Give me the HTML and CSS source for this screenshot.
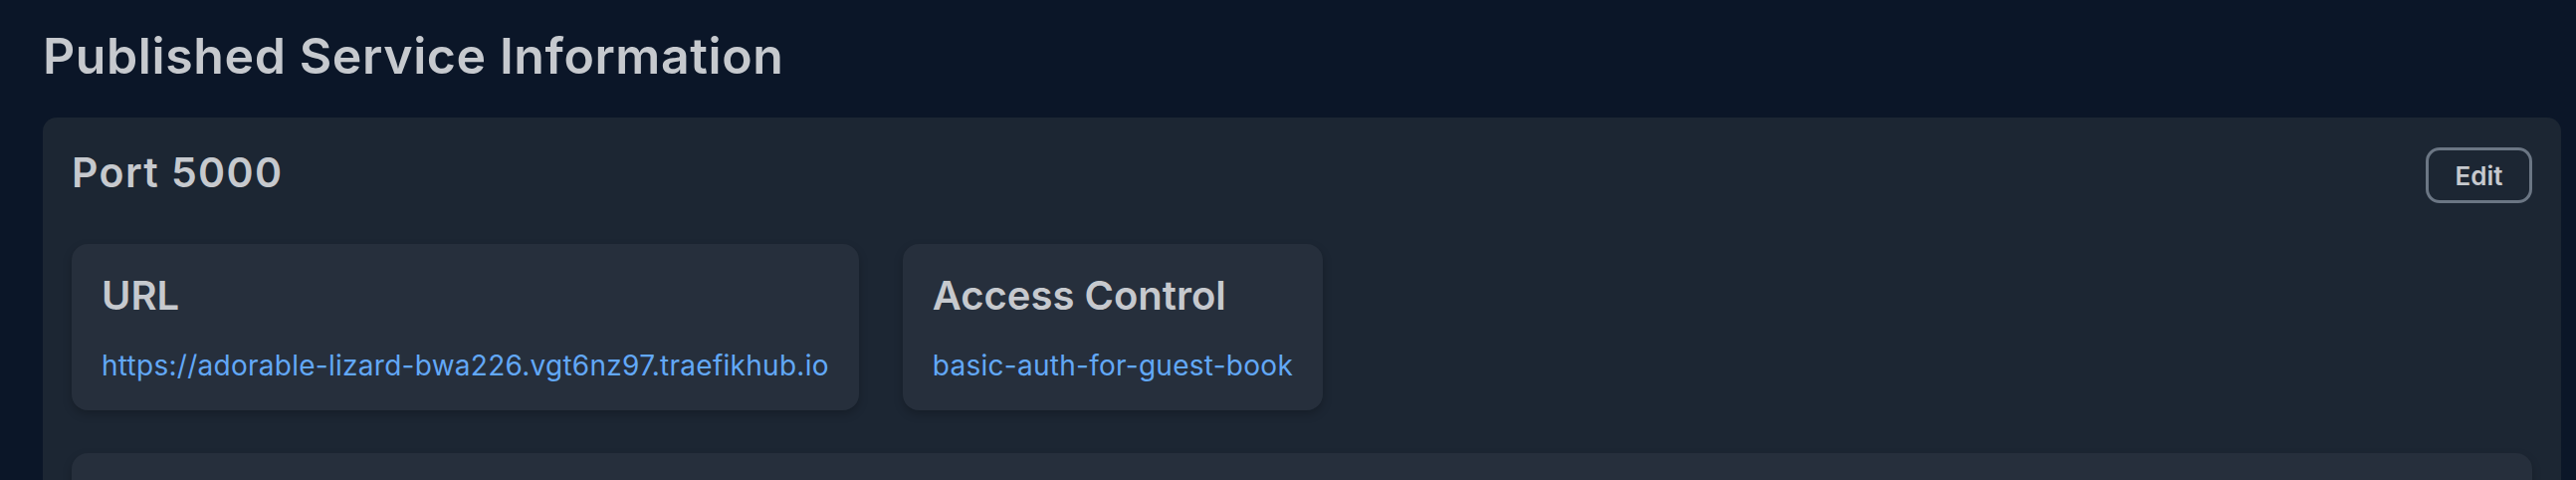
FILE: index.html
```html
<!DOCTYPE html>
<html lang="en">
  <head>
    <meta charset="UTF-8" />
    <meta name="viewport" content="width=device-width, initial-scale=1.0" />
    <title>Published Service Information</title>
    <link rel="stylesheet" href="styles.css">
  </head>
  <body>
    <h1 class="page-title">Published Service Information</h1>
    <div class="port-card">
      <div class="port-head">
        <h2>Port 5000</h2>
        <button class="edit-btn">Edit</button>
      </div>
      <div class="info-grid">
        <div class="info-card">
          <h3>URL</h3>
          <a href="#">https://adorable-lizard-bwa226.vgt6nz97.traefikhub.io</a>
        </div>
        <div class="info-card">
          <h3>Access Control</h3>
          <a href="#">basic-auth-for-guest-book</a>
        </div>
      </div>
      <div class="info-card wide">
        <h3>&nbsp;</h3>
        <a href="#">&nbsp;</a>
      </div>
    </div>
  </body>
</html>
```

FILE: styles.css
```css
* {
  margin: 0;
  padding: 0;
  box-sizing: border-box;
}
body {
  background-color: #0b1628;
  color: #c6c9ce;
  font-family: Inter, "Noto Sans", sans-serif;
  padding: 26px 15px 0 43px;
  overflow: hidden;
}
a {
  text-decoration: none;
  color: #62a8f7;
}
.page-title {
  font-size: 50px;
  font-weight: 600;
  line-height: 60px;
  letter-spacing: 0.6px;
  margin-bottom: 32px;
}

/* port card */
.port-card {
  background-color: #1c2633;
  border-radius: 14px;
  padding: 30px 29px 29px 29px;
}
.port-head {
  display: flex;
  justify-content: space-between;
  align-items: flex-start;
  height: 56px;
  margin-bottom: 41px;
}
.port-head h2 {
  font-size: 41px;
  font-weight: 600;
  line-height: 50px;
  letter-spacing: 1.4px;
}
.edit-btn {
  width: 107px;
  height: 56px;
  background: transparent;
  border: 3px solid #6b7684;
  border-radius: 14px;
  color: #c6c9ce;
  font-family: inherit;
  font-size: 26px;
  font-weight: 600;
}

/* inner cards */
.info-grid {
  display: flex;
  column-gap: 44px;
  margin-bottom: 43px;
}
.info-card {
  background-color: #262f3c;
  border-radius: 16px;
  padding: 28px 30px 28px 30px;
  box-shadow: 0 4px 10px rgba(0, 0, 0, 0.22);
}
.info-card h3 {
  font-size: 40px;
  font-weight: 600;
  line-height: 48px;
  margin-bottom: 29px;
}
.info-card a {
  display: block;
  font-size: 28px;
  line-height: 34px;
  letter-spacing: 0.27px;
}
```
